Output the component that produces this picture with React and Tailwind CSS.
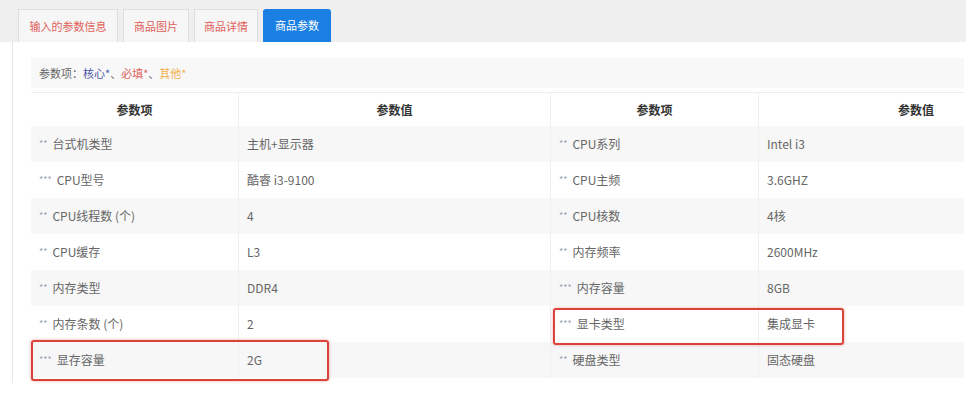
import React from "react";

const left = [
  ["* *", "台式机类型", "主机+显示器"],
  ["* * *", "CPU型号", "酷睿 i3-9100"],
  ["* *", "CPU线程数 (个)", "4"],
  ["* *", "CPU缓存", "L3"],
  ["* *", "内存类型", "DDR4"],
  ["* *", "内存条数 (个)", "2"],
  ["* * *", "显存容量", "2G"],
];
const right = [
  ["* *", "CPU系列", "Intel i3"],
  ["* *", "CPU主频", "3.6GHZ"],
  ["* *", "CPU核数", "4核"],
  ["* *", "内存频率", "2600MHz"],
  ["* * *", "内存容量", "8GB"],
  ["* * *", "显卡类型", "集成显卡"],
  ["* *", "硬盘类型", "固态硬盘"],
];

function Label({ stars, text }) {
  return (
    <div className="flex items-center pl-[8px]">
      <span className="text-[9px] text-[#9aa3b8] tracking-[-1px] mr-[6px]">{stars}</span>
      <span>{text}</span>
    </div>
  );
}

export default function App() {
  return (
    <div
      className="w-[966px] h-[403px] overflow-hidden bg-white text-[12px] text-[#666]"
      style={{ fontFamily: '"Noto Sans CJK SC", "Noto Sans", sans-serif' }}
    >
      <div className="h-[42px] bg-[#efefef] flex items-end pl-[18px] gap-[5px] text-[11px]">
        <div className="h-[33px] w-[100px] flex items-center justify-center border border-[#dedede] border-b-0 bg-[#f6f6f6] text-[#e0605a]">
          输入的参数信息
        </div>
        <div className="h-[33px] w-[66px] flex items-center justify-center border border-[#dedede] border-b-0 bg-[#f6f6f6] text-[#e0605a]">
          商品图片
        </div>
        <div className="h-[33px] w-[64px] flex items-center justify-center border border-[#dedede] border-b-0 bg-[#f6f6f6] text-[#e0605a]">
          商品详情
        </div>
        <div className="h-[33px] w-[68px] flex items-center justify-center rounded-t-[3px] bg-[#1a7fe3] text-white">
          商品参数
        </div>
      </div>
      <div className="ml-[12px] border-l border-[#e6e6e6] h-[341px] pl-[18px] pt-[16px] relative">
        <div className="w-[933px] overflow-hidden">
          <div className="h-[30px] bg-[#f8f8f8] flex items-center pl-[8px] text-[11px]">
            <span>参数项：</span>
            <span className="text-[#4a55a8]">核心*</span>
            <span>、</span>
            <span className="text-[#e0605a]">必填*</span>
            <span>、</span>
            <span className="text-[#f0b04a]">其他*</span>
          </div>
          <div className="w-[1042px] mt-[4px] border-t border-[#ececec]">
            <div className="grid grid-cols-[208px_312px_208px_314px] h-[33px] items-center font-bold text-[#333] bg-white">
              <div className="text-center border-r border-[#f0f0f0] h-full flex items-center justify-center">参数项</div>
              <div className="text-center border-r border-[#f0f0f0] h-full flex items-center justify-center">参数值</div>
              <div className="text-center border-r border-[#f0f0f0] h-full flex items-center justify-center">参数项</div>
              <div className="text-center h-full flex items-center justify-center">参数值</div>
            </div>
            {left.map((l, i) => {
              const r = right[i];
              return (
                <div
                  key={i}
                  className={
                    "grid grid-cols-[208px_312px_208px_314px] h-[36px] items-center " +
                    (i % 2 === 0 ? "bg-[#f7f7f7]" : "bg-white")
                  }
                >
                  <div className="h-full flex items-center border-r border-[#efefef]">
                    <Label stars={l[0]} text={l[1]} />
                  </div>
                  <div className="h-full flex items-center pl-[8px] border-r border-[#efefef]">{l[2]}</div>
                  <div className="h-full flex items-center border-r border-[#efefef]">
                    <Label stars={r[0]} text={r[1]} />
                  </div>
                  <div className="h-full flex items-center pl-[8px]">{r[2]}</div>
                </div>
              );
            })}
          </div>
        </div>
        <div className="absolute left-[18px] top-[298px] w-[298px] h-[41px] border-2 border-[#d9433a] rounded-[3px] shadow-[0_0_3px_rgba(217,67,58,0.5)]"></div>
        <div className="absolute left-[540px] top-[266px] w-[291px] h-[37px] border-2 border-[#d9433a] rounded-[3px] shadow-[0_0_3px_rgba(217,67,58,0.5)]"></div>
      </div>
    </div>
  );
}
